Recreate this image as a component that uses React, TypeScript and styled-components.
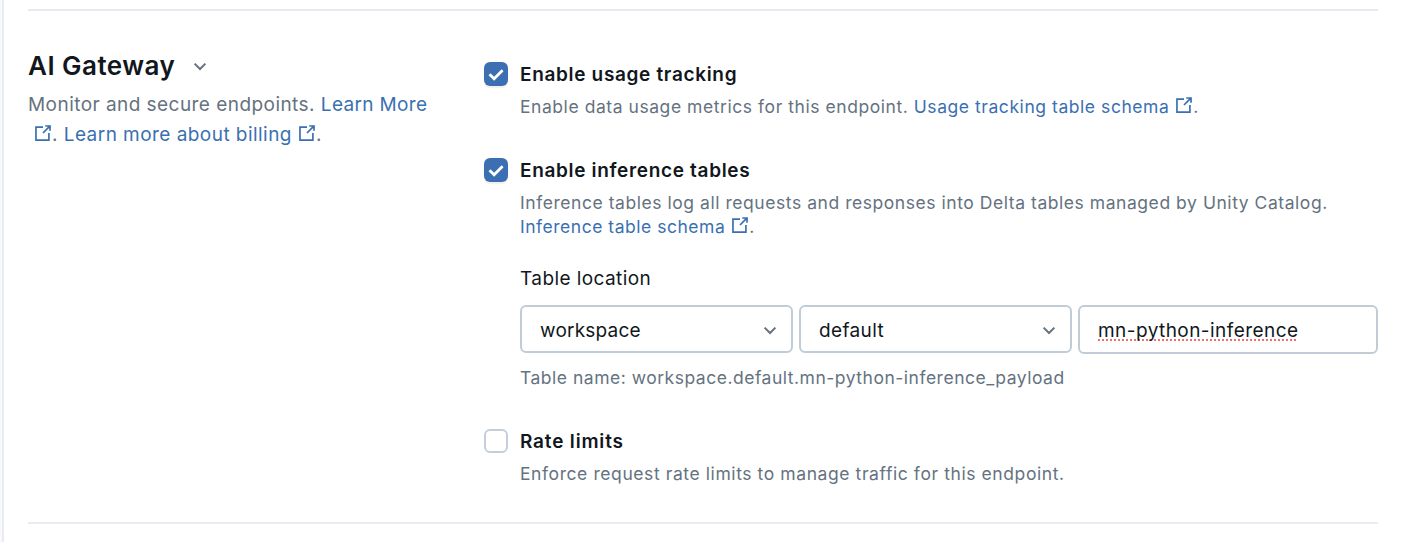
import React from 'react';
import styled, { createGlobalStyle } from 'styled-components';

const Global = createGlobalStyle`
  * { box-sizing: border-box; }
  body { margin: 0; background: #f8f9fb; font-family: Inter, "Liberation Sans", sans-serif; color: #11171c; }
`;

const Page = styled.main`
  height: 542px;
  margin-left: 2px;
  border-left: 2px solid #e9ebf2;
  padding: 9px 34px 0 24px;
  background: #fff;
  overflow: hidden;
`;
const Section = styled.section`
  display: grid;
  grid-template-columns: 456px 1fr;
  height: 515px;
  border-top: 2px solid #e8eaf0;
  border-bottom: 2px solid #e8ecf0;
`;
const Intro = styled.div`
  padding-top: 37px;
`;
const Heading = styled.h2`
  display: flex;
  align-items: center;
  gap: 18px;
  margin: 0 0 6px;
  font-size: 26px;
  line-height: 36px;
  font-weight: 600;
  letter-spacing: 0.47px;
  white-space: nowrap;
`;
const Hint = styled.div<{ $ls?: number }>`
  font-size: 17.5px;
  line-height: 24px;
  letter-spacing: ${p => p.$ls ?? 0.55}px;
  color: #65727f;
  white-space: nowrap;
`;
const IntroText = styled(Hint)`
  font-size: 19px;
  line-height: 30px;
  letter-spacing: ${p => p.$ls ?? 0.45}px;
`;
const Link = styled.a<{ $ls?: number }>`
  color: #3a70b2;
  text-decoration: none;
  letter-spacing: ${p => (p.$ls === undefined ? 'inherit' : `${p.$ls}px`)};
`;
const External = styled.svg`
  width: 18px;
  height: 18px;
  margin-left: 6px;
  vertical-align: -1px;
  color: #3a70b2;
`;
const Options = styled.div`
  padding-top: 51px;
`;
const Option = styled.div<{ $gap?: number }>`
  display: grid;
  grid-template-columns: 24px 1fr;
  column-gap: 12px;
  margin-bottom: ${p => p.$gap ?? 0}px;
`;
const Check = styled.span<{ $on?: boolean }>`
  display: flex;
  align-items: center;
  justify-content: center;
  width: 24px;
  height: 24px;
  border-radius: 6px;
  border: ${p => (p.$on ? '0' : '2px solid #c5cfda')};
  background: ${p => (p.$on ? '#3b6fb1' : '#fff')};
  box-shadow: ${p => (p.$on ? '0 2px 1px rgba(0, 0, 0, 0.06)' : 'none')};
`;
const Title = styled.div<{ $ls?: number }>`
  padding-top: 1px;
  font-size: 19px;
  font-weight: 600;
  line-height: 24px;
  margin-bottom: 8px;
  letter-spacing: ${p => p.$ls ?? 0.67}px;
`;
const Label = styled.div`
  margin: 28px 0 14px;
  font-size: 19px;
  line-height: 24px;
  letter-spacing: 0.42px;
`;
const Fields = styled.div`
  display: grid;
  grid-template-columns: 273px 273px 300px;
  align-items: start;
  gap: 6px;
  margin-bottom: 12px;
`;
const Field = styled.div<{ $ls: number }>`
  display: flex;
  align-items: center;
  justify-content: space-between;
  height: 48px;
  padding: 2px 14px 0 18px;
  border: 2px solid #c0cdd8;
  border-radius: 6px;
  font-size: 19px;
  letter-spacing: ${p => p.$ls}px;
`;
const TextField = styled(Field)`
  height: 49px;
`;
const Misspelled = styled.span`
  text-decoration: underline dotted #f0716b 2px;
  text-underline-offset: 2px;
  text-decoration-skip-ink: none;
`;

const Chevron = () => (
  <svg width="14" height="10" viewBox="0 0 14 10" fill="none" stroke="#65727f" strokeWidth="2">
    <path d="M1.6 2.6 7 8 12.4 2.6" />
  </svg>
);
const Ext = () => (
  <External viewBox="0 0 16 16" fill="currentColor">
    <path d="M10 1h5v5h-1.5V3.56L8.53 8.53 7.47 7.47 12.44 2.5H10z" />
    <path d="M1 2h7v1.5H2.5v10h10V8H14v7H1z" />
  </External>
);
const Tick = () => (
  <svg width="18" height="14" viewBox="0 0 18 14" fill="none" stroke="#fff" strokeWidth="2.8">
    <path d="m2.5 7.2 4.6 4.5L15.6 3.2" />
  </svg>
);

export default function App() {
  return (
    <Page>
      <Global />
      <Section>
        <Intro>
          <Heading>AI Gateway <Chevron /></Heading>
          <IntroText>Monitor and secure endpoints. <Link $ls={0.35}>Learn More</Link></IntroText>
          <IntroText><Ext />. <Link>Learn more about billing</Link><Ext />.</IntroText>
        </Intro>
        <Options>
          <Option $gap={39}>
            <Check $on><Tick /></Check>
            <div>
              <Title>Enable usage tracking</Title>
              <Hint $ls={0.555}>Enable data usage metrics for this endpoint. <Link>Usage tracking table schema</Link><Ext />.</Hint>
            </div>
          </Option>
          <Option $gap={39}>
            <Check $on><Tick /></Check>
            <div>
              <Title>Enable inference tables</Title>
              <Hint $ls={0.55}>Inference tables log all requests and responses into Delta tables managed by Unity Catalog.</Hint>
              <Hint $ls={0.52}><Link>Inference table schema</Link><Ext />.</Hint>
              <Label>Table location</Label>
              <Fields>
                <Field $ls={0.2}>workspace <Chevron /></Field>
                <Field $ls={0.36}>default <Chevron /></Field>
                <TextField $ls={0.44}><Misspelled>mn-python-inference</Misspelled></TextField>
              </Fields>
              <Hint $ls={0.51}>Table name: workspace.default.mn-python-inference_payload</Hint>
            </div>
          </Option>
          <Option>
            <Check />
            <div>
              <Title $ls={0.82}>Rate limits</Title>
              <Hint $ls={0.585}>Enforce request rate limits to manage traffic for this endpoint.</Hint>
            </div>
          </Option>
        </Options>
      </Section>
    </Page>
  );
}
